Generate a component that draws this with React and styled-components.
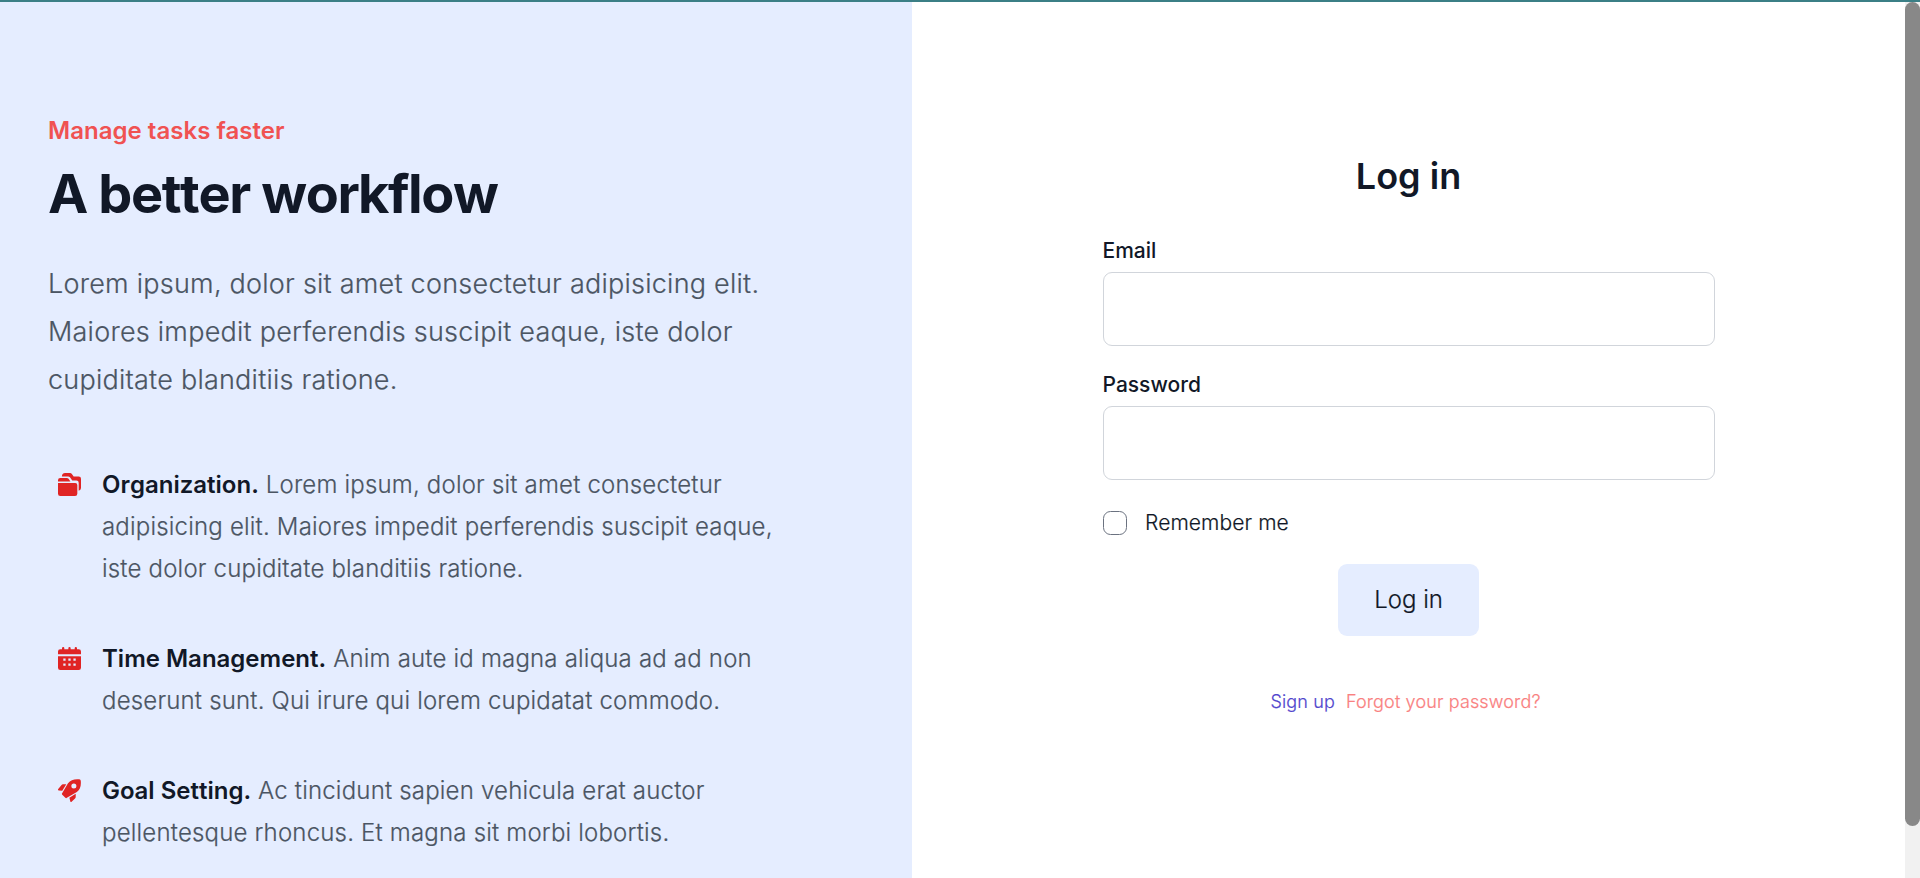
import React from "react";
import styled, { createGlobalStyle } from "styled-components";

const Global = createGlobalStyle`
  *{box-sizing:border-box;margin:0}
  html,body{height:878px;overflow:hidden}
  body{margin:0;background:#fff;font-family:Inter,"Liberation Sans",sans-serif;font-weight:300;color:#111827;font-variant-ligatures:none}
`;
const Page = styled.div`display:flex;flex-direction:column;height:878px;overflow:hidden;`;
const TopLine = styled.div`height:2px;flex:none;background:#3b7f86;`;
const Columns = styled.div`display:flex;flex:1;min-height:0;`;
const Intro = styled.section`width:912px;flex:none;background:#e5edff;padding:111px 0 0 48px;overflow:hidden;`;
const Kicker = styled.h2`font-size:24px;line-height:36px;font-weight:600;color:#f05252;letter-spacing:.03px;`;
const Title = styled.h1`margin-top:9px;font-size:54px;line-height:72px;font-weight:700;letter-spacing:-1.4px;font-kerning:none;`;
const Lead = styled.p`margin-top:30px;width:740px;font-size:27px;line-height:48px;letter-spacing:.24px;color:#4b5563;-webkit-text-stroke:.2px;`;
const Features = styled.ul`margin-top:60px;padding:0;list-style:none;display:grid;gap:48px;width:740px;`;
const Feature = styled.li`display:flex;font-size:24px;line-height:42px;color:#4b5563;`;
const Description = styled.p`width:686px;letter-spacing:.19px;-webkit-text-stroke:.2px;`;
const Glyph = styled.svg`flex:none;width:23px;height:23px;margin:9px 21.5px 0 9.5px;fill:#e02424;`;
const Strong = styled.strong`font-weight:600;color:#111827;letter-spacing:0;font-kerning:none;-webkit-text-stroke:0;`;
const Side = styled.main`flex:1;display:flex;flex-direction:column;align-items:center;padding-top:144px;`;
const Heading = styled.h2`font-size:36px;line-height:60px;font-weight:600;`;
const Form = styled.form`width:612px;margin-top:29px;display:flex;flex-direction:column;`;
const Field = styled.label`display:block;font-size:21px;line-height:32px;font-weight:500;margin-bottom:23px;`;
const Input = styled.input`display:block;width:100%;height:74px;margin-top:5px;border:1px solid #d1d5db;border-radius:9px;background:#fff;`;
const Remember = styled.label`display:flex;align-items:center;gap:18.5px;font-size:21px;line-height:32px;margin-top:4px;letter-spacing:.1px;-webkit-text-stroke:.2px;`;
const Check = styled.input`appearance:none;width:24px;height:24px;margin:0;border:1px solid #6b7280;border-radius:7.5px;`;
const Button = styled.button`align-self:center;margin-top:25px;padding:0 0 2px;width:141px;height:72px;border:0;border-radius:9px;background:#e5edff;font:inherit;font-size:24px;color:#111827;-webkit-text-stroke:.2px;`;
const Links = styled.nav`display:flex;gap:11px;font-size:18px;line-height:28px;margin-top:52px;padding-right:6px;letter-spacing:.14px;-webkit-text-stroke:.2px;`;
const Link = styled.a`color:${p => p.$color};`;
const Bar = styled.div`width:15px;flex:none;background:#f1f1f1;`;
const Thumb = styled.div`height:824px;background:#888;border-radius:8px;`;

const Folders = () => (
  <Glyph viewBox="0 0 20 20">
    <path d="M3.4 3A3 3 0 0 1 6.2 0H10.3a2 2 0 0 1 1.6.7L13.6 3H18a2 2 0 0 1 2 2v8a2.4 2.4 0 0 1-2 2.4V8.5a2 2 0 0 0-2-2h-3.6l-2-2.7A2 2 0 0 0 8.8 3Z" />
    <path d="M0 7.3V6.4a2 2 0 0 1 2-2h5.7a2 2 0 0 1 1.5.7L10.8 7.3ZM0 8.6h15a1.8 1.8 0 0 1 1.8 1.8V18a2 2 0 0 1-2 2H2a2 2 0 0 1-2-2Z" />
  </Glyph>
);
const Calendar = () => (
  <Glyph viewBox="0 0 20 20">
    <path d="M20 4a2 2 0 0 0-2-2h-1.5V1a1 1 0 0 0-2 0v1H11V1a1 1 0 0 0-2 0v1H5.5V1a1 1 0 0 0-2 0v1H2a2 2 0 0 0-2 2v2.3h20Z" />
    <path fillRule="evenodd" d="M0 8h20v10a2 2 0 0 1-2 2H2a2 2 0 0 1-2-2ZM4.6 10v2h2v-2ZM9 10v2h2v-2ZM13.4 10v2h2v-2ZM4.6 14.3v2h2v-2ZM9 14.3v2h2v-2ZM13.4 14.3v2h2v-2Z" />
  </Glyph>
);
const Rocket = () => (
  <Glyph viewBox="0 0 20 20">
    <path fillRule="evenodd" d="M18.5.2C14-.2 11 .8 8.7 3.6L3.6 12.3a1 1 0 0 0 .1 1.3l2.7 2.7a1 1 0 0 0 1.3.1L16.4 11.3C19.3 9 20.2 6 19.8 1.5A1.5 1.5 0 0 0 18.5.2ZM13.8 3.9a2.2 2.2 0 1 1 0 4.4a2.2 2.2 0 0 1 0-4.4Z" />
    <path d="M7.2 4.6H4.3a1.5 1.5 0 0 0-1.2.6L.2 8.8a.7.7 0 0 0 .5 1.1l3 .4ZM15.4 12.8V15.7a1.5 1.5 0 0 1-.6 1.2L11.8 19.8a.7.7 0 0 1-1.1-.5L9.9 16.4Z" />
  </Glyph>
);

const features = [
  [Folders, "Organization.", "Lorem ipsum, dolor sit amet consectetur adipisicing elit. Maiores impedit perferendis suscipit eaque, iste dolor cupiditate blanditiis ratione."],
  [Calendar, "Time Management.", "Anim aute id magna aliqua ad ad non deserunt sunt. Qui irure qui lorem cupidatat commodo."],
  [Rocket, "Goal Setting.", "Ac tincidunt sapien vehicula erat auctor pellentesque rhoncus. Et magna sit morbi lobortis."],
];

export default function App() {
  return (
    <>
      <Global />
      <Page>
        <TopLine />
        <Columns>
          <Intro>
            <Kicker>Manage tasks faster</Kicker>
            <Title>A better workflow</Title>
            <Lead>Lorem ipsum, dolor sit amet consectetur adipisicing elit. Maiores impedit perferendis suscipit eaque, iste dolor cupiditate blanditiis ratione.</Lead>
            <Features>
              {features.map(([Icon, name, text]) => (
                <Feature key={name}>
                  <Icon />
                  <Description><Strong>{name}</Strong> {text}</Description>
                </Feature>
              ))}
            </Features>
          </Intro>
          <Side>
            <Heading>Log in</Heading>
            <Form>
              <Field>Email<Input type="email" /></Field>
              <Field>Password<Input type="password" /></Field>
              <Remember><Check type="checkbox" />Remember me</Remember>
              <Button type="button">Log in</Button>
            </Form>
            <Links>
              <Link $color="#5145cd">Sign up</Link>
              <Link $color="#f98080">Forgot your password?</Link>
            </Links>
          </Side>
          <Bar><Thumb /></Bar>
        </Columns>
      </Page>
    </>
  );
}
